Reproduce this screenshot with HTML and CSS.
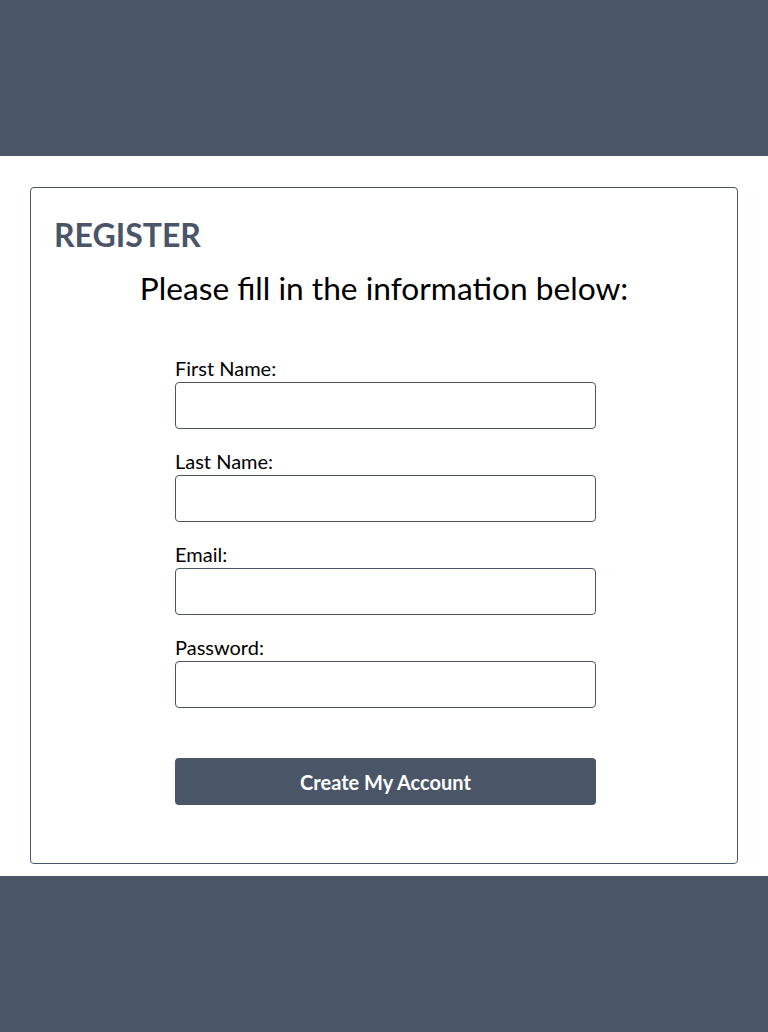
FILE: index.html
```html
<!DOCTYPE html>
<html lang="en">
<head>
<meta charset="utf-8">
<title>Register</title>
<link rel="stylesheet" href="styles.css">
</head>
<body>
<header class="top-bar"></header>
<main class="page">
  <section class="card">
    <h1 class="card-title">REGISTER</h1>
    <h2 class="card-subtitle">Please fill in the information below:</h2>
    <form class="reg-form">
      <div class="field">
        <label class="field-label" for="fn">First Name:</label>
        <input class="field-input" id="fn" type="text">
      </div>
      <div class="field">
        <label class="field-label" for="ln">Last Name:</label>
        <input class="field-input" id="ln" type="text">
      </div>
      <div class="field">
        <label class="field-label" for="em">Email:</label>
        <input class="field-input" id="em" type="email">
      </div>
      <div class="field">
        <label class="field-label" for="pw">Password:</label>
        <input class="field-input" id="pw" type="password">
      </div>
      <button class="submit-btn" type="button">Create My Account</button>
    </form>
  </section>
</main>
<footer class="bottom-bar"></footer>
</body>
</html>
```
FILE: styles.css
```css
* { box-sizing: border-box; }
html, body { margin: 0; padding: 0; }
body {
  font-family: Lato, "Open Sans", sans-serif;
  background: #ffffff;
  color: #000000;
}
.top-bar {
  height: 156px;
  background: #4a5568;
}
.bottom-bar {
  height: 156px;
  background: #4a5568;
}
.page {
  padding: 31px 30px 12px;
}
.card {
  border: 1px solid #4a5568;
  border-radius: 4px;
  height: 677px;
  padding: 28px 23px 0;
}
.card-title {
  margin: 0;
  font-size: 32px;
  line-height: 38.4px;
  font-weight: 700;
  color: #4a5568;
}
.card-subtitle {
  margin: 15px 0 0;
  font-size: 31.7px;
  line-height: 38px;
  font-weight: 400;
  text-align: center;
}
.reg-form {
  width: 421px;
  margin: 49px 0 0 121px;
  display: flex;
  flex-direction: column;
}
.field {
  display: flex;
  flex-direction: column;
  margin-bottom: 20px;
}
.field:last-of-type { margin-bottom: 50px; }
.field-label {
  font-size: 20px;
  line-height: 24px;
  margin-bottom: 2px;
}
.field-input {
  height: 47px;
  border: 1px solid #4a5568;
  border-radius: 4px;
  font: inherit;
  padding: 0 10px;
}
.submit-btn {
  height: 47px;
  border: none;
  border-radius: 4px;
  background: #4a5568;
  color: #ffffff;
  font-family: Lato, sans-serif;
  font-size: 20px;
  font-weight: 700;
}
```
